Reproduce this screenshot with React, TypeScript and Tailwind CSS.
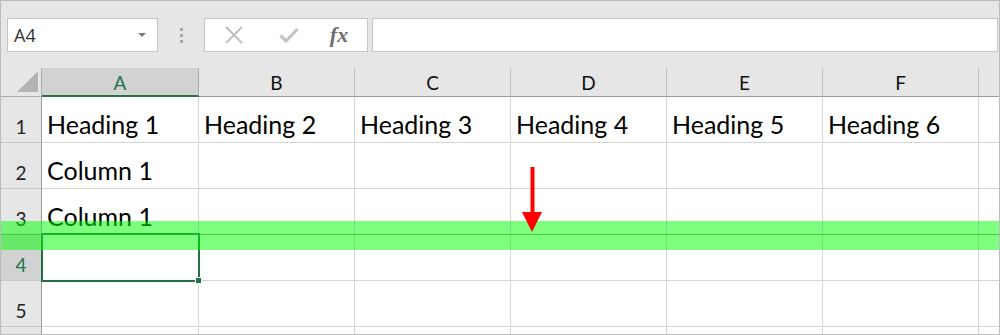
import React from "react";

const COLS = ["A", "B", "C", "D", "E", "F"];

const ROWS: { n: number; cells: string[] }[] = [
  { n: 1, cells: ["Heading 1", "Heading 2", "Heading 3", "Heading 4", "Heading 5", "Heading 6"] },
  { n: 2, cells: ["Column 1", "", "", "", "", ""] },
  { n: 3, cells: ["Column 1", "", "", "", "", ""] },
  { n: 4, cells: ["", "", "", "", "", ""] },
  { n: 5, cells: ["", "", "", "", "", ""] },
];

const grid = "grid grid-cols-[41px_157px_156px_156px_156px_156px_156px_1fr]";

function Toolbar() {
  return (
    <div className="h-[67px] flex items-start pt-[17px] pl-[6px] pr-px">
      {/* name box */}
      <div className="w-[151px] h-[34px] bg-white border border-[#c6c6c6] flex items-center justify-between pl-[6px] pr-[11px]">
        <span className="text-[18px] text-[#333] font-['Open_Sans',sans-serif]">A4</span>
        <svg width="8" height="4" viewBox="0 0 8 4">
          <path d="M0 0h8L4 4z" fill="#7a7a7a" />
        </svg>
      </div>
      {/* grip dots */}
      <div className="w-[46px] h-[34px] flex flex-col items-center justify-center gap-[3px]">
        <span className="w-[3px] h-[3px] bg-[#a6a6a6]" />
        <span className="w-[3px] h-[3px] bg-[#a6a6a6]" />
        <span className="w-[3px] h-[3px] bg-[#a6a6a6]" />
      </div>
      {/* formula buttons */}
      <div className="w-[164px] h-[34px] bg-white border border-[#c6c6c6] flex items-center">
        <div className="w-[56px] flex justify-center pl-[2px]">
          <svg width="18" height="18" viewBox="0 0 18 18">
            <path d="M1 1L17 17M17 1L1 17" stroke="#bdbdbd" strokeWidth="1.8" />
          </svg>
        </div>
        <div className="w-[56px] flex justify-center">
          <svg width="20" height="16" viewBox="0 0 20 16">
            <path d="M1.5 8.5L7 14L18.5 2" stroke="#c4c4c4" strokeWidth="3.2" fill="none" />
          </svg>
        </div>
        <div className="flex-1 flex justify-center pr-[6px]">
          <span className="text-[22px] italic font-bold leading-none text-[#6e6e6e] font-['Liberation_Serif',serif]">
            fx
          </span>
        </div>
      </div>
      {/* formula input */}
      <div className="flex-1 ml-[4px] h-[34px] bg-white border border-[#c6c6c6]" />
    </div>
  );
}

function HeaderRow() {
  return (
    <div className={`${grid} h-[29px]`}>
      <div className="border-b border-r border-[#ababab] flex items-end justify-end pr-[2px] pb-[3px]">
        <svg width="22" height="22" viewBox="0 0 22 22">
          <path d="M21 0V21H0z" fill="#b4b4b4" />
        </svg>
      </div>
      {COLS.map((c, i) => (
        <div
          key={c}
          className={
            i === 0
              ? "bg-[#d2d2d2] border-b-2 border-b-[#217346] border-r border-r-[#ababab] flex items-end justify-center pb-[3px] text-[19px] leading-none text-[#217346] font-['Lato',sans-serif]"
              : "border-r border-r-[#c0c0c0] border-b border-b-[#9b9b9b] flex items-end justify-center pb-[4px] text-[19px] leading-none text-[#111] font-['Lato',sans-serif]"
          }
        >
          {c}
        </div>
      ))}
      <div className="border-b border-[#9b9b9b]" />
    </div>
  );
}

function DataRow({ n, cells }: { n: number; cells: string[] }) {
  const active = n === 4;
  return (
    <div className={`${grid} h-[46px]`}>
      <div
        className={`border-r border-r-[#9b9b9b] border-b border-b-[#c6c6c6] flex items-end justify-center pb-[6px] text-[19px] leading-none font-['Lato',sans-serif] ${
          active ? "bg-[#d2d2d2] text-[#217346]" : "text-[#222]"
        }`}
      >
        {n}
      </div>
      {cells.map((t, i) => (
        <div
          key={i}
          className="bg-white border-r border-b border-[#d4d4d4] flex items-end pl-[5px] pb-[5px] text-[25px] leading-none text-black font-['Lato',sans-serif] whitespace-nowrap"
        >
          {t}
        </div>
      ))}
      <div className="bg-white border-b border-[#d4d4d4]" />
    </div>
  );
}

export default function App() {
  return (
    <div className="relative w-[1000px] h-[335px] overflow-hidden border border-[#bcbcbc] bg-[#e6e6e6]">
      <Toolbar />
      <HeaderRow />
      {ROWS.map((r) => (
        <DataRow key={r.n} n={r.n} cells={r.cells} />
      ))}
      <div className={`${grid} h-[10px]`}>
        <div className="border-r border-[#9b9b9b]" />
        {COLS.map((c) => (
          <div key={c} className="bg-white border-r border-[#d4d4d4]" />
        ))}
        <div className="bg-white" />
      </div>

      {/* insert indicator line */}
      <div className="absolute left-0 right-0 top-[233px] h-px bg-[#8c8c8c]" />

      {/* selected cell A4 */}
      <div className="absolute left-[40px] top-[232px] w-[159px] h-[49px] border-2 border-[#217346]" />
      <div className="absolute left-[194px] top-[276px] w-[7px] h-[7px] bg-[#217346] border border-white" />

      {/* highlight band */}
      <div className="absolute -left-px -right-px top-[220px] h-[29px] bg-[#00ff00]/50" />

      {/* red arrow */}
      <svg className="absolute left-[519px] top-[165px]" width="24" height="67" viewBox="0 0 24 67">
        <path d="M10.5 1H14.5V47H10.5z" fill="#ff0000" />
        <path d="M2 46H22L12 66z" fill="#ff0000" />
      </svg>
    </div>
  );
}
